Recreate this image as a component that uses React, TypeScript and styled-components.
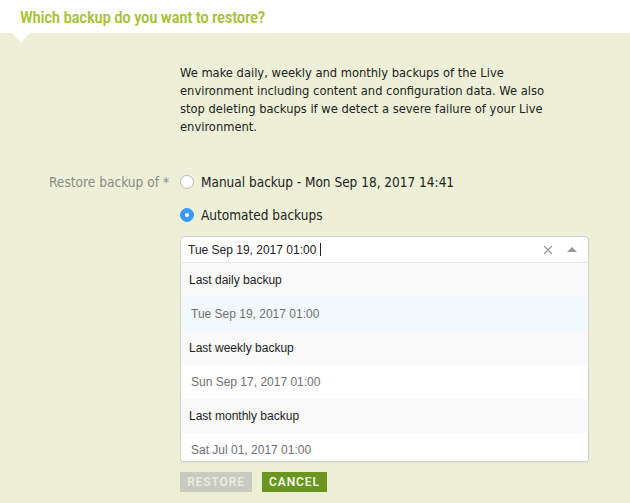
import React from "react";
import styled, { createGlobalStyle } from "styled-components";

const GlobalStyle = createGlobalStyle`
  html, body {
    margin: 0;
    padding: 0;
    background: #edf0d7;
  }
  body {
    font-family: "DejaVu Sans Condensed", "DejaVu Sans", sans-serif;
    font-stretch: condensed;
  }
`;

const Page = styled.div`
  width: 630px;
  height: 503px;
  overflow: hidden;
  background: #edf0d7;
`;

const Header = styled.div`
  position: relative;
  height: 33px;
  background: #fff;
  display: flex;
  align-items: center;
  padding-left: 20px;
  &::after {
    content: "";
    position: absolute;
    left: 12px;
    top: 33px;
    border-left: 9px solid transparent;
    border-right: 9px solid transparent;
    border-top: 10px solid #fff;
  }
`;

const Title = styled.h1`
  margin: 0;
  font-family: "Roboto", "Liberation Sans", sans-serif;
  font-weight: 500;
  font-size: 17px;
  letter-spacing: -0.3px;
  color: #a6c132;
`;

const Form = styled.div`
  padding-top: 31px;
  display: flex;
  flex-direction: column;
`;

const FormRow = styled.div<{ $gap?: number }>`
  display: grid;
  grid-template-columns: 170px 409px;
  column-gap: 10px;
  margin-bottom: ${({ $gap }) => $gap ?? 0}px;
`;

const Label = styled.div`
  text-align: right;
  color: #8a8a84;
  font-size: 13.6px;
  line-height: 18px;
  padding-right: 1px;
`;

const Description = styled.p`
  margin: 0;
  font-size: 12.8px;
  line-height: 18px;
  color: #222;
  width: 372px;
`;

const RadioRow = styled.label`
  display: flex;
  align-items: center;
  gap: 7px;
  height: 18px;
  font-size: 13.5px;
  color: #222;
`;

const RadioDot = styled.span<{ $checked?: boolean }>`
  width: 14px;
  height: 14px;
  border-radius: 50%;
  box-sizing: border-box;
  flex: none;
  background: ${({ $checked }) => ($checked ? "#3b98f8" : "#fff")};
  border: 1px solid ${({ $checked }) => ($checked ? "#3b98f8" : "#b9b9b9")};
  display: flex;
  align-items: center;
  justify-content: center;
  &::after {
    content: "";
    display: ${({ $checked }) => ($checked ? "block" : "none")};
    width: 4px;
    height: 4px;
    border-radius: 50%;
    background: #fff;
  }
`;

const Select = styled.div`
  font-family: "Liberation Sans", Arial, sans-serif;
  font-stretch: normal;
  font-size: 12px;
`;

const Control = styled.div`
  height: 27px;
  box-sizing: border-box;
  background: #fff;
  border: 1px solid #d3d3d3;
  border-bottom-color: #e6e6e6;
  border-radius: 4px 4px 0 0;
  display: flex;
  align-items: center;
  padding: 0 8px 0 7px;
  color: #222;
`;

const Value = styled.div`
  flex: 1;
  display: flex;
  align-items: center;
`;

const Caret = styled.span`
  display: inline-block;
  width: 1px;
  height: 13px;
  background: #222;
  margin-left: 4px;
`;

const Clear = styled.span`
  width: 14px;
  display: flex;
  justify-content: center;
  margin-right: 12px;
`;

const Arrow = styled.span`
  width: 0;
  height: 0;
  border-left: 5px solid transparent;
  border-right: 5px solid transparent;
  border-bottom: 5px solid #999;
  margin-right: 3px;
`;

const Menu = styled.div`
  height: 199px;
  overflow: hidden;
  background: #fff;
  border: 1px solid #d3d3d3;
  border-top: none;
  border-radius: 0 0 4px 4px;
  box-sizing: border-box;
  box-shadow: 0 1px 0 rgba(0, 0, 0, 0.06);
`;

const GroupHeading = styled.div`
  height: 34px;
  display: flex;
  align-items: center;
  padding-left: 8px;
  background: #f9f9f9;
  color: #222;
`;

const Option = styled.div<{ $focused?: boolean }>`
  height: 34px;
  display: flex;
  align-items: center;
  padding-left: 10px;
  color: #707070;
  background: ${({ $focused }) => ($focused ? "#f2f9fc" : "#fff")};
`;

const Buttons = styled.div`
  display: flex;
  gap: 10px;
`;

const Button = styled.button<{ $primary?: boolean }>`
  height: 20px;
  width: ${({ $primary }) => ($primary ? "65px" : "72px")};
  padding: 0;
  border: none;
  border-radius: 0;
  font-family: "Roboto", "Liberation Sans", sans-serif;
  font-weight: 500;
  font-size: 12px;
  letter-spacing: 0.9px;
  text-transform: uppercase;
  background: ${({ $primary }) => ($primary ? "#6a961f" : "#c8cbbd")};
  color: ${({ $primary }) => ($primary ? "#fff" : "#ebede3")};
`;

const groups = [
  { heading: "Last daily backup", value: "Tue Sep 19, 2017 01:00", focused: true },
  { heading: "Last weekly backup", value: "Sun Sep 17, 2017 01:00" },
  { heading: "Last monthly backup", value: "Sat Jul 01, 2017 01:00" },
];

export default function App() {
  return (
    <Page>
      <GlobalStyle />
      <Header>
        <Title>Which backup do you want to restore?</Title>
      </Header>
      <Form>
        <FormRow $gap={37}>
          <div />
          <Description>
            We make daily, weekly and monthly backups of the Live environment
            including content and configuration data. We also stop deleting
            backups if we detect a severe failure of your Live environment.
          </Description>
        </FormRow>
        <FormRow $gap={15}>
          <Label>Restore backup of *</Label>
          <RadioRow>
            <RadioDot />
            Manual backup - Mon Sep 18, 2017 14:41
          </RadioRow>
        </FormRow>
        <FormRow $gap={12}>
          <div />
          <RadioRow>
            <RadioDot $checked />
            Automated backups
          </RadioRow>
        </FormRow>
        <FormRow $gap={10}>
          <div />
          <Select>
            <Control>
              <Value>
                Tue Sep 19, 2017 01:00
                <Caret />
              </Value>
              <Clear>
                <svg width="10" height="10" viewBox="0 0 10 10">
                  <path d="M1 1L9 9M9 1L1 9" stroke="#999" strokeWidth="1.1" />
                </svg>
              </Clear>
              <Arrow />
            </Control>
            <Menu>
              {groups.map((g) => (
                <React.Fragment key={g.heading}>
                  <GroupHeading>{g.heading}</GroupHeading>
                  <Option $focused={g.focused}>{g.value}</Option>
                </React.Fragment>
              ))}
            </Menu>
          </Select>
        </FormRow>
        <FormRow>
          <div />
          <Buttons>
            <Button>Restore</Button>
            <Button $primary>Cancel</Button>
          </Buttons>
        </FormRow>
      </Form>
    </Page>
  );
}
